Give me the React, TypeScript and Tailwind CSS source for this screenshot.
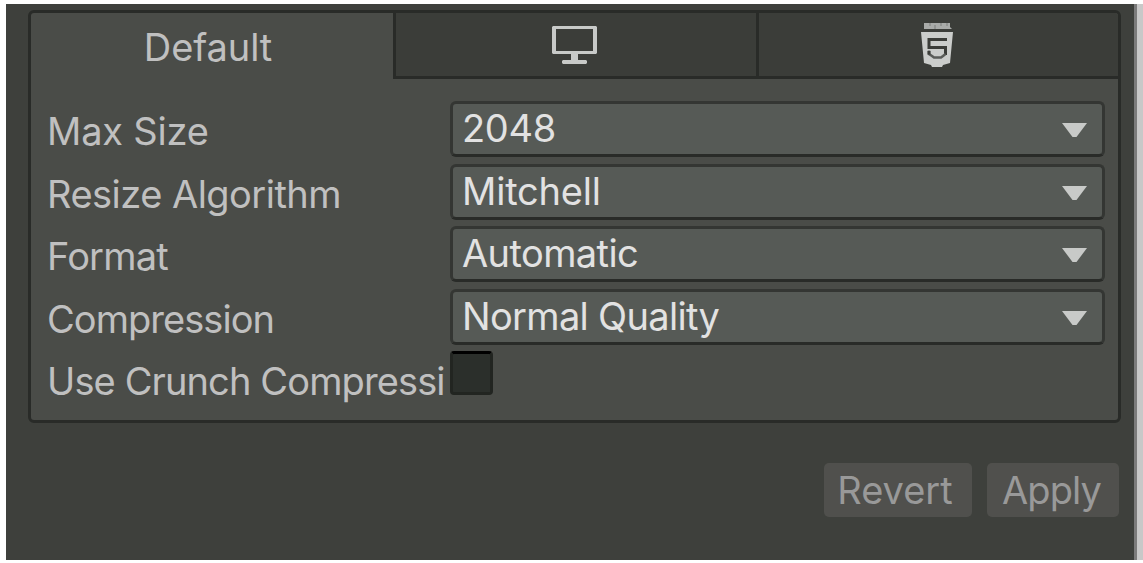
import React from "react";

const settings = [
  { label: "Max Size", value: "2048", labelTracking: "tracking-[-0.2px]", valueTracking: "tracking-[-0.3px]", height: "h-[63px]" },
  { label: "Resize Algorithm", value: "Mitchell", labelTracking: "tracking-[-0.52px]", valueTracking: "tracking-[-0.2px]", height: "h-[62px]" },
  { label: "Format", value: "Automatic", labelTracking: "tracking-[-0.8px]", valueTracking: "tracking-[-0.6px]", height: "h-[63px]" },
  { label: "Compression", value: "Normal Quality", labelTracking: "tracking-[-0.95px]", valueTracking: "tracking-[-0.68px]", height: "h-[62px]" },
];

function MonitorIcon() {
  return (
    <svg width="45" height="38" viewBox="0 0 45 38" fill="#c8cac8">
      <path fillRule="evenodd" d="M1 0H44L45 1V27L44 28H26V34H34L35 35V37L34 38H11L10 37V35L11 34H19V28H1L0 27V1ZM4 3V25H41V3Z" />
    </svg>
  );
}

function Html5Icon() {
  return (
    <svg width="32" height="44" viewBox="0 0 32 44">
      <path d="M3 0H29V4L31 6H3Z" fill="#a9aba9" />
      <path d="M9 0V3M14 2V6M20 0V3M26 0V3" stroke="#8b8d8b" strokeWidth="1.5" />
      <path d="M0 9H32L29 40L22 42L21 44H11L10 42L3 40Z" fill="#cbcdcb" />
      <path d="M26 16.500H8V24.500H24.500V32" fill="none" stroke="#3b3d39" strokeWidth="3" />
      <path d="M8 27.500V31L11 33L13 34.500H20L22 33L24.500 31" fill="none" stroke="#5a5c59" strokeWidth="2.500" />
      <path d="M8 28V31.500" stroke="#3b3d39" strokeWidth="3" />
    </svg>
  );
}

function Arrow() {
  return (
    <svg width="25" height="15" viewBox="0 0 25 15" className="mt-0.5">
      <path d="M0 0H25L14.500 14H10.500Z" fill="#c8cac8" />
    </svg>
  );
}

export default function App() {
  return (
    <div className="flex h-[563px] w-[1143px] overflow-hidden bg-white pt-1 pl-1.5 font-['Inter',sans-serif] text-[38px] leading-[46px] text-[#c0c0c0]">
      <main className="h-[556px] w-[1128px] shrink-0 bg-[#3e403c] pt-1.5 pl-[22px]">
        <section className="h-[413px] w-[1093px] rounded-[6px] border-[3px] border-[#292b28] bg-[#4a4c48]">
          <nav className="flex h-[66px]">
            <button className="w-[362px] pt-[2px] pr-[8px] pb-[1px] tracking-[-0.1px]">Default</button>
            <button className="flex w-[363px] items-start justify-center border-b-[3px] border-l-[3px] border-[#292b28] bg-[#3b3d39] pt-[13px] pr-[4px]">
              <MonitorIcon />
            </button>
            <button className="flex flex-1 items-start justify-center rounded-tr-[3px] border-b-[3px] border-l-[3px] border-[#292b28] bg-[#3b3d39] pt-[10px] pr-[3px]">
              <Html5Icon />
            </button>
          </nav>
          <div className="pt-[22px] pl-4">
            {settings.map((s) => (
              <div key={s.label} className={"flex " + s.height}>
                <div className={"w-[403px] whitespace-nowrap pt-[7px] " + s.labelTracking}>{s.label}</div>
                <button className="flex h-14 w-[655px] items-center justify-between rounded-[6px] border-[3px] border-[#343633] border-b-[#292b28] bg-[#565a56] pr-[15px] pl-[9px] text-[#e2e2e2]">
                  <span className={"whitespace-nowrap pb-[2px] " + s.valueTracking}>{s.value}</span>
                  <Arrow />
                </button>
              </div>
            ))}
            <div className="flex">
              <div className="w-[403px] whitespace-nowrap pt-[7px] tracking-[-0.88px]">Use Crunch Compressi</div>
              <div className="h-11 w-[43px] rounded-[4px] border-[3px] border-[#222521] border-t-black bg-[#2b2f2b]" />
            </div>
          </div>
        </section>
        <div className="mt-10 flex gap-[15px] pl-[796px] text-[#999999]">
          <button className="h-[54px] w-[148px] rounded-[5px] bg-[#50504d] pr-[6px]">Revert</button>
          <button className="h-[54px] w-[132px] rounded-[5px] bg-[#50504d] pr-[3px] tracking-[-0.9px]">Apply</button>
        </div>
      </main>
      <div className="h-[556px] w-[3px] shrink-0 bg-[#7b7b7b]" />
      <div className="h-[556px] w-1.5 shrink-0 bg-[#c8c8c8]" />
    </div>
  );
}
